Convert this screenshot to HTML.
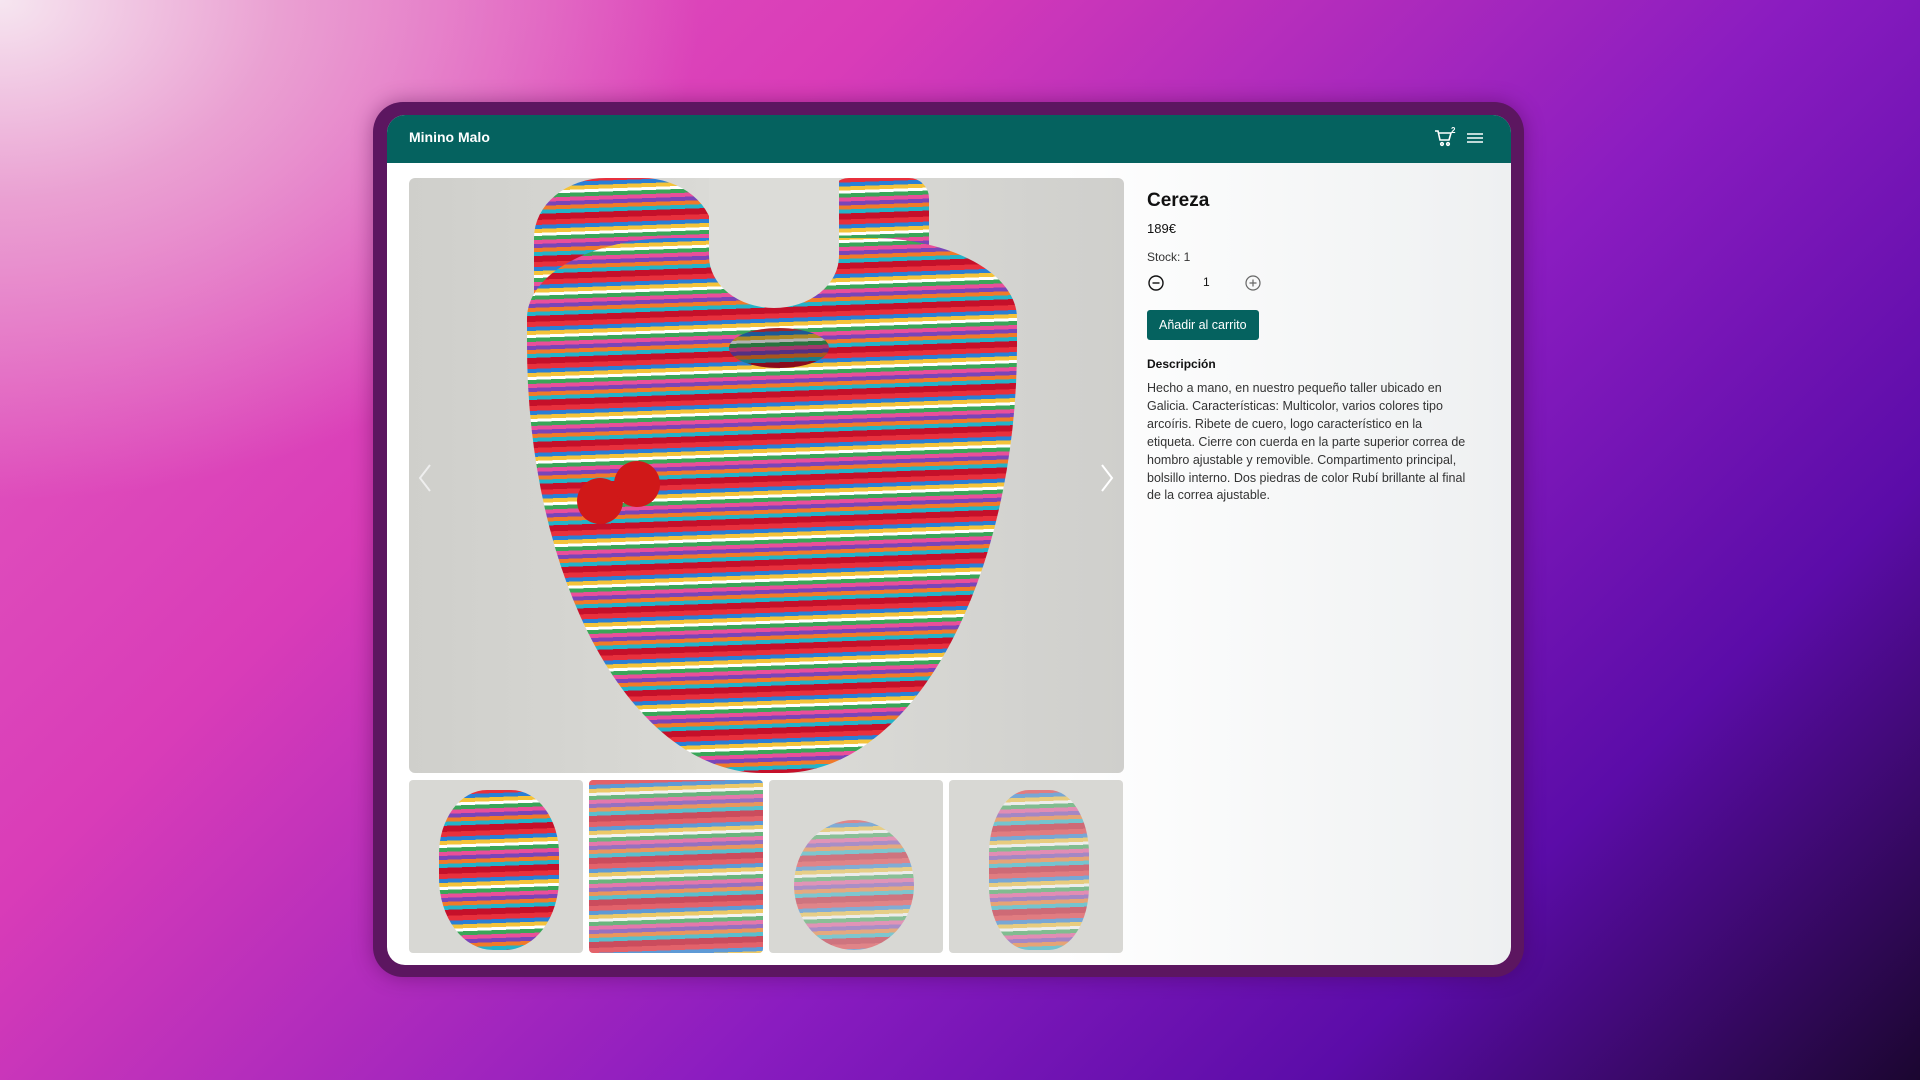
<!DOCTYPE html>
<html><head><meta charset="utf-8"><style>
*{margin:0;padding:0;box-sizing:border-box}
body{width:1920px;height:1080px;overflow:hidden;position:relative;font-family:"Liberation Sans",sans-serif;
background:radial-gradient(ellipse 700px 500px at 0% 0%,#f6e6f0 0%,#eaa0d2 40%,transparent 100%),linear-gradient(135deg,#e560c0 0%,#d93cb8 30%,#8a1cc0 60%,#5b0ca8 80%,#1b0630 100%);}
.frame{position:absolute;left:373px;top:102px;width:1151px;height:875px;border-radius:30px;background:#5c1660;box-shadow:0 0 20px rgba(60,0,60,.4)}
.screen{position:absolute;left:387px;top:115px;width:1124px;height:850px;border-radius:18px;overflow:hidden;background:linear-gradient(90deg,#fff 60%,#eef0f1)}
.hdr{height:48px;background:#05625f;position:relative}
.logo{position:absolute;left:22px;top:14px;color:#fff;font-weight:bold;font-size:14px}
.main{position:absolute;left:22px;top:63px;width:715px;height:595px;border-radius:6px;overflow:hidden;background:linear-gradient(90deg,#cfcfcb,#dcdcd8 50%,#cfcfcc)}
.stripes{background:repeating-linear-gradient(178deg,#e8303c 0 5px,#2a7fd6 5px 9px,#f4c33a 9px 13px,#fff 13px 16px,#3aa658 16px 20px,#e94f9a 20px 24px,#7a45b8 24px 28px,#f07a2a 28px 32px,#24b3c8 32px 36px,#c5102a 36px 42px)}
.body{position:absolute;left:118px;top:60px;width:490px;height:535px;border-radius:30% 30% 48% 48%/15% 15% 80% 80%}
.s1{position:absolute;left:125px;top:0;width:180px;height:150px;border-radius:40% 40% 0 0}
.s2{position:absolute;left:420px;top:0;width:100px;height:150px;border-radius:20px 20px 0 0}
.hole{position:absolute;left:300px;top:0;width:130px;height:130px;background:#dcdcd8;border-radius:0 0 50% 50%/0 0 40% 40%}
.thumbs{position:absolute;left:22px;top:665px;display:flex;gap:6px}
.th{width:174px;height:173px;border-radius:4px;overflow:hidden;position:relative;background:#d8d8d4}
.right{position:absolute;left:760px;top:63px;width:330px;color:#111}
.btn{display:inline-block;background:#05625f;color:#fff;font-size:12.5px;padding:8px 12px;border-radius:3px}
.desc{font-size:12.5px;line-height:17.9px;color:#333;width:322px}
</style></head><body>
<div class="frame"></div>
<div class="screen">
 <div class="hdr"><div class="logo">Minino Malo</div>
  <svg style="position:absolute;left:1046px;top:12px" width="24" height="22" viewBox="0 0 24 22" fill="none" stroke="#fff" stroke-width="1.6"><path d="M2 4h3l2 9h9l2-7H6"/><circle cx="9" cy="17" r="1.3"/><circle cx="15" cy="17" r="1.3"/><text x="18" y="6" fill="#fff" stroke="none" font-size="8" font-weight="bold" font-family="Liberation Sans">2</text></svg>
  <svg style="position:absolute;left:1080px;top:16px" width="16" height="14" stroke="#fff" stroke-width="1.6"><path d="M0 3h16M0 7h16M0 11h16"/></svg>
 </div>
 <div class="main">
  <div class="s1 stripes"></div><div class="s2 stripes"></div>
  <div class="body stripes"></div>
  <div class="hole"></div>
  <div class="stripes" style="position:absolute;left:320px;top:150px;width:100px;height:40px;border-radius:50%;filter:brightness(.7)"></div>
  <div style="position:absolute;left:168px;top:300px;width:46px;height:46px;border-radius:50%;background:#d01818"></div>
  <div style="position:absolute;left:205px;top:283px;width:46px;height:46px;border-radius:50%;background:#d01818"></div>
  <svg style="position:absolute;left:8px;top:285px" width="16" height="30" stroke="#eee" stroke-width="2" fill="none"><path d="M13 2L3 15l10 13"/></svg>
  <svg style="position:absolute;left:690px;top:285px" width="16" height="30" stroke="#fff" stroke-width="2" fill="none"><path d="M3 2l10 13L3 28"/></svg>
 </div>
 <div class="thumbs">
  <div class="th"><div class="stripes" style="position:absolute;left:30px;top:10px;width:120px;height:160px;border-radius:40% 40% 45% 45%"></div></div>
  <div class="th"><div class="stripes" style="position:absolute;left:0;top:0;width:174px;height:173px;opacity:.7"></div></div>
  <div class="th"><div class="stripes" style="position:absolute;left:25px;top:40px;width:120px;height:130px;border-radius:50%;opacity:.5"></div></div>
  <div class="th"><div class="stripes" style="position:absolute;left:40px;top:10px;width:100px;height:160px;border-radius:40%;opacity:.55"></div></div>
 </div>
 <div class="right">
  <div style="font-size:19px;font-weight:bold;margin-top:12px">Cereza</div>
  <div style="font-size:13px;margin-top:9px">189€</div>
  <div style="font-size:12px;margin-top:14px;color:#333">Stock: 1</div>
  <div style="margin-top:10px;height:18px;position:relative;font-size:12px">
   <svg width="18" height="18" style="position:absolute;left:0;top:0" fill="none" stroke="#111" stroke-width="1.4"><circle cx="9" cy="9" r="7"/><path d="M5.5 9h7"/></svg>
   <span style="position:absolute;left:56px;top:1px">1</span>
   <svg width="18" height="18" style="position:absolute;left:97px;top:0" fill="none" stroke="#666" stroke-width="1.2"><circle cx="9" cy="9" r="7"/><path d="M5.5 9h7M9 5.5v7"/></svg>
  </div>
  <div class="btn" style="margin-top:18px">Añadir al carrito</div>
  <div style="font-size:12px;font-weight:bold;margin-top:17px">Descripción</div>
  <div class="desc" style="margin-top:9px">Hecho a mano, en nuestro pequeño taller ubicado en Galicia. Características: Multicolor, varios colores tipo arcoíris. Ribete de cuero, logo característico en la etiqueta. Cierre con cuerda en la parte superior correa de hombro ajustable y removible. Compartimento principal, bolsillo interno. Dos piedras de color Rubí brillante al final de la correa ajustable.</div>
 </div>
</div>
</body></html>
